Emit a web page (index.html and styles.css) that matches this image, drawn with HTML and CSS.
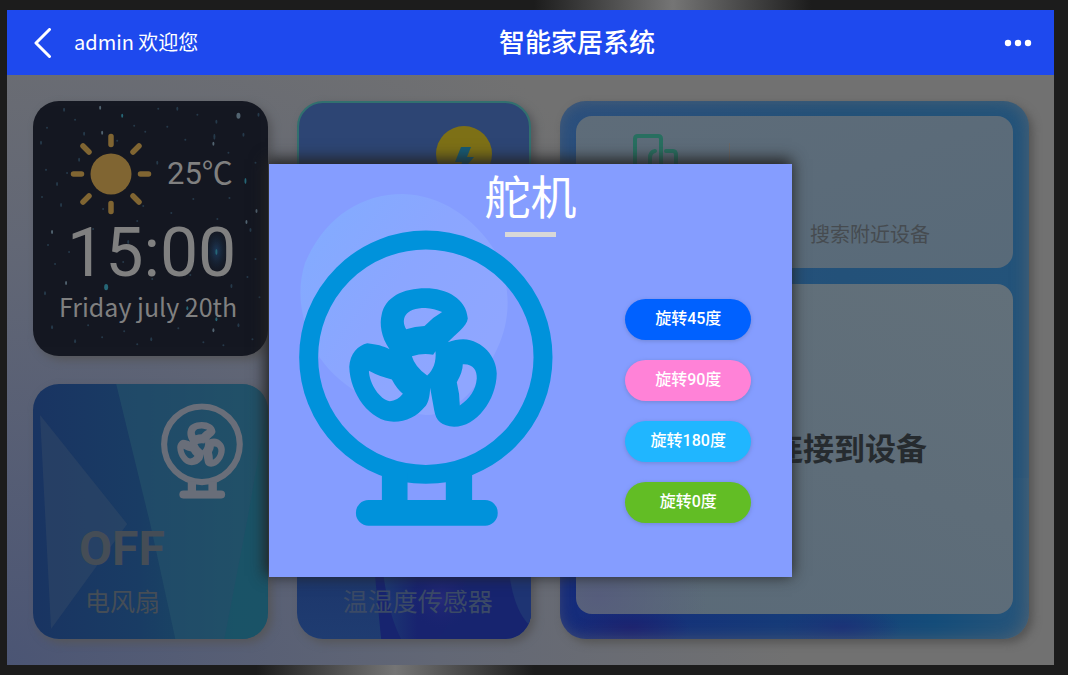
FILE: index.html
```html
<!DOCTYPE html>
<html lang="zh-CN">
<head>
<meta charset="utf-8">
<meta name="viewport" content="width=device-width, initial-scale=1">
<title>智能家居系统</title>
<link rel="stylesheet" href="styles.css">
</head>
<body>
<svg class="defs" aria-hidden="true">
  <symbol id="fan" viewBox="57 29 763 889">
    <circle cx="438" cy="411" r="352" fill="none" stroke="currentColor" stroke-width="57"/>
    <path fill="currentColor" d="M306 760H383V845H306ZM498 760H577V845H498Z"/>
    <rect x="228" y="840" width="426" height="77" rx="38" fill="currentColor"/>
    <path fill="currentColor" fill-rule="evenodd" d="M329 387C303 350 299 310 305 285C315 230 370 204 437 204C500 204 560 235 564 295C562 318 525 345 504 366C520 360 535 357 550 357C610 360 650 410 651 460C650 540 590 620 523 620C486 618 468 603 463 570L451 503C450 530 446 545 438 557C410 590 380 605 342 605C270 605 210 520 208 440C210 400 235 375 262 369C290 372 310 377 329 387ZM379 327C362 295 375 263 437 263C455 264 470 268 487 275L460 293L434 317Q405 318 379 327ZM396 408Q430 398 460 404L467 393C470 425 460 450 442 466Q405 440 396 408ZM267 452Q300 470 336 478Q350 505 369 521Q352 543 330 543C300 540 268 490 267 452ZM549 432C580 430 592 450 591 475C588 510 570 535 540 556Q540 520 531 486Q549 455 549 432Z"/>
  </symbol>
</svg>
<div class="app">
  <header class="topbar">
    <div class="user">
      <button class="icon-btn" type="button" aria-label="返回">
        <svg width="18" height="30" viewBox="0 0 18 30"><path d="M15.500 1.500 2 15 15.500 28.500" fill="none" stroke="#fff" stroke-width="3" stroke-linecap="round" stroke-linejoin="round"/></svg>
      </button>
      <span class="welcome">admin 欢迎您</span>
    </div>
    <h1 class="title">智能家居系统</h1>
    <button class="icon-btn" type="button" aria-label="更多">
      <svg width="28" height="8" viewBox="0 0 28 8" fill="#fff"><circle cx="4" cy="4" r="3.200"/><circle cx="14" cy="4" r="3.200"/><circle cx="24" cy="4" r="3.200"/></svg>
    </button>
  </header>

  <main class="board">
    <section class="card weather">
      <svg class="stars" viewBox="0 0 234 255" preserveAspectRatio="xMidYMid slice" aria-hidden="true">
        <defs>
          <radialGradient id="nebula"><stop offset="0" stop-color="#1d3b5c"/><stop offset="1" stop-color="#151822" stop-opacity="0"/></radialGradient>
        </defs>
        <ellipse cx="183" cy="150" rx="14" ry="26" fill="url(#nebula)"/>
        <g fill="#2a4355" opacity=".8">
          <ellipse cx="31" cy="9" rx="1" ry="2"/><ellipse cx="14" cy="27" rx="1" ry="1"/><ellipse cx="51" cy="33" rx="1" ry="2"/><ellipse cx="8" cy="42" rx="1" ry="2"/><ellipse cx="101" cy="25" rx="1" ry="1"/><ellipse cx="125" cy="8" rx="1" ry="1"/><ellipse cx="144" cy="8" rx="1" ry="2"/><ellipse cx="183" cy="21" rx="1" ry="2"/><ellipse cx="181" cy="36" rx="1" ry="3"/><ellipse cx="210" cy="34" rx="1" ry="2"/><ellipse cx="225" cy="14" rx="1" ry="2"/><ellipse cx="46" cy="59" rx="1" ry="2"/><ellipse cx="24" cy="83" rx="1" ry="2"/><ellipse cx="13" cy="69" rx="1" ry="1"/><ellipse cx="124" cy="62" rx="1" ry="2"/><ellipse cx="196" cy="97" rx="1" ry="1"/><ellipse cx="28" cy="104" rx="1" ry="2"/><ellipse cx="15" cy="144" rx="1" ry="1"/><ellipse cx="60" cy="128" rx="1" ry="1"/><ellipse cx="95" cy="141" rx="1" ry="2"/><ellipse cx="22" cy="163" rx="1" ry="1"/><ellipse cx="217" cy="129" rx="1" ry="2"/><ellipse cx="222" cy="158" rx="1" ry="1"/><ellipse cx="55" cy="171" rx="1" ry="2"/><ellipse cx="12" cy="192" rx="1" ry="2"/><ellipse cx="157" cy="174" rx="1" ry="1"/><ellipse cx="198" cy="185" rx="1" ry="2"/><ellipse cx="19" cy="226" rx="1" ry="2"/><ellipse cx="69" cy="236" rx="1" ry="1"/><ellipse cx="42" cy="240" rx="1" ry="2"/><ellipse cx="91" cy="230" rx="1" ry="1"/><ellipse cx="118" cy="238" rx="1" ry="2"/><ellipse cx="145" cy="227" rx="1" ry="1"/><ellipse cx="170" cy="241" rx="1" ry="1"/><ellipse cx="205" cy="224" rx="1" ry="2"/>
          <circle cx="42" cy="19" r="1"/><circle cx="84" cy="40" r="1"/><circle cx="112" cy="31" r="1"/><circle cx="134" cy="26" r="1"/><circle cx="152" cy="39" r="1"/><circle cx="164" cy="14" r="1"/><circle cx="195" cy="52" r="1"/><circle cx="222" cy="62" r="1"/><circle cx="34" cy="72" r="1"/><circle cx="9" cy="96" r="1"/><circle cx="70" cy="108" r="1"/><circle cx="110" cy="105" r="1"/><circle cx="138" cy="112" r="1"/><circle cx="160" cy="98" r="1"/><circle cx="184" cy="118" r="1"/><circle cx="36" cy="151" r="1"/><circle cx="104" cy="120" r="1"/><circle cx="90" cy="161" r="1"/><circle cx="119" cy="178" r="1"/><circle cx="214" cy="176" r="1"/><circle cx="226" cy="196" r="1"/><circle cx="30" cy="211" r="1"/><circle cx="55" cy="224" r="1"/><circle cx="104" cy="243" r="1"/><circle cx="190" cy="244" r="1"/><circle cx="219" cy="238" r="1"/>
        </g>
        <g fill="#526471">
          <ellipse cx="67" cy="7" rx="1" ry="2"/><ellipse cx="205" cy="15" rx="2" ry="3"/><ellipse cx="180" cy="43" rx="1" ry="2"/><ellipse cx="69" cy="32" rx="1" ry="2"/><ellipse cx="19" cy="131" rx="1" ry="2"/><ellipse cx="33" cy="182" rx="1" ry="2"/><ellipse cx="213" cy="121" rx="1" ry="2"/><ellipse cx="223" cy="110" rx="1" ry="2"/><ellipse cx="180" cy="229" rx="1" ry="2"/>
        </g>
        <g fill="#266676">
          <ellipse cx="89" cy="15" rx="1" ry="2"/><ellipse cx="73" cy="186" rx="2" ry="3"/><ellipse cx="212" cy="80" rx="1" ry="3"/><ellipse cx="183" cy="151" rx="1" ry="3"/><ellipse cx="154" cy="207" rx="1" ry="2"/><ellipse cx="183" cy="218" rx="1" ry="2"/>
        </g>
      </svg>
      <div class="weather-row">
        <svg width="82" height="82" viewBox="0 0 82 82" aria-hidden="true">
          <circle cx="41" cy="41" r="20.500" fill="#806532"/>
          <g stroke="#806532" stroke-width="5.500" stroke-linecap="round"><path d="M41 3.500V11.500M41 70.500V78.500M3.500 41H11.500M70.500 41H78.500M13 13 19 19M63 63 69 69M69 13 63 19M19 63 13 69"/></g>
        </svg>
        <span class="temp">25℃</span>
      </div>
      <div class="time">15:00</div>
      <div class="date">Friday july 20th</div>
    </section>

    <section class="card light">
      <svg width="56" height="56" viewBox="0 0 56 56" aria-hidden="true"><circle cx="28" cy="28" r="28" fill="#7d7016"/><path d="M25 21H35L31 31H38L23 49 26 36H19Z" fill="#165b75"/></svg>
    </section>

    <section class="card connect">
      <div class="panel search">
        <svg class="device-icon" width="48" height="48" viewBox="0 0 48 48" fill="none" stroke="#286f60" stroke-width="4" stroke-linecap="round" aria-hidden="true"><path d="M12 38H5Q2 38 2 34V5Q2 2 5 2H25Q28 2 28 5V34"/><path d="M17 34V24Q17 18 22 17M33 17H40Q43 17 43 21V42H20"/></svg>
        <span class="divider"></span>
        <span class="search-text">搜索附近设备</span>
      </div>
      <div class="panel status"><span>连接到设备</span></div>
    </section>

    <section class="card fan-card">
      <svg class="facets" viewBox="0 0 234 255" preserveAspectRatio="none" aria-hidden="true">
        <path d="M83 0H234V255H142L117 140Z" fill="#25516a" opacity=".65"/>
        <path d="M7 31 94 140 18 245Z" fill="#46566a" opacity=".3"/>
        <path d="M234 20V255H191L215 130Z" fill="#155567" opacity=".6"/>
      </svg>
      <svg class="fan-small" viewBox="57 29 763 889" aria-hidden="true"><use href="#fan" x="57" y="29" width="763" height="889"/></svg>
      <div class="fan-state">OFF</div>
      <div class="fan-name">电风扇</div>
    </section>

    <section class="card sensor">
      <svg class="facets" viewBox="0 0 234 255" preserveAspectRatio="none" aria-hidden="true">
        <defs>
          <linearGradient id="wave" x1="0" x2="1"><stop offset="0" stop-color="#1d3a73"/><stop offset=".4" stop-color="#18236f"/></linearGradient>
          <radialGradient id="glow"><stop offset="0" stop-color="#262a78"/><stop offset="1" stop-color="#18236f" stop-opacity="0"/></radialGradient>
        </defs>
        <path d="M76 170C80 215 82 235 84 255H234V170Z" fill="#17246f"/>
        <path d="M84 170C88 215 96 240 104 255H140C155 240 165 210 175 170Z" fill="url(#wave)"/>
        <circle cx="144" cy="215" r="32" fill="url(#glow)"/>
        <path d="M210 170C212 205 219 230 234 243V170Z" fill="#1e3473"/>
      </svg>
      <div class="sensor-name">温湿度传感器</div>
    </section>

    <div class="overlay">
      <section class="modal" role="dialog" aria-labelledby="dialog-title">
        <svg class="blob" viewBox="0 0 208 222" aria-hidden="true">
          <defs><linearGradient id="blob-fill" x1="0" y1=".2" x2=".8" y2=".8"><stop offset="0" stop-color="#83abff"/><stop offset=".5" stop-color="#8ba6ff"/><stop offset="1" stop-color="#8fa6ff"/></linearGradient></defs>
          <path d="M103 0C140 1 174 23 195 57C212 91 211 126 197 155C181 190 157 221 126 221C84 217 42 196 20 164C2 132-5 101 5 69C24 25 59 0 103 0Z" fill="url(#blob-fill)"/>
        </svg>
        <h2 class="modal-title" id="dialog-title">舵机</h2>
        <div class="modal-body">
          <svg class="fan-large" viewBox="57 29 763 889" aria-hidden="true"><use href="#fan" x="57" y="29" width="763" height="889"/></svg>
          <div class="actions">
            <button class="pill blue" type="button">旋转45度</button>
            <button class="pill pink" type="button">旋转90度</button>
            <button class="pill sky" type="button">旋转180度</button>
            <button class="pill green" type="button">旋转0度</button>
          </div>
        </div>
      </section>
    </div>
  </main>
</div>
</body>
</html>
```

FILE: styles.css
```css
* {
  box-sizing: border-box;
}

body {
  margin: 0;
  min-height: 100vh;
  padding: 10px 14px 10px 7px;
  display: flex;
  flex-direction: column;
  font-family: Roboto, "Noto Sans CJK SC", sans-serif;
  background:
    linear-gradient(90deg, #1c1c1c 50%, #757575 63%, #1c1c1c 76%) top / 100% 10px no-repeat,
    linear-gradient(90deg, #1c1c1c 24%, #757575 37%, #1c1c1c 50%) bottom / 100% 10px no-repeat,
    #1c1c1c;
}

h1,
h2 {
  margin: 0;
}

button {
  font: inherit;
  border: 0;
}

.defs {
  position: absolute;
  width: 0;
  height: 0;
}

.app {
  flex: 1;
  display: flex;
  flex-direction: column;
}

.topbar {
  height: 65px;
  display: grid;
  grid-template-columns: 48% 1fr auto;
  align-items: center;
  padding-right: 22px;
  background: #1e49ee;
  color: #fff;
}

.user {
  display: flex;
  align-items: center;
  gap: 22px;
  padding-left: 27px;
}

.icon-btn {
  display: flex;
  padding: 0;
  background: none;
}

.welcome {
  padding-bottom: 2px;
  font-family: "Noto Sans CJK SC", sans-serif;
  font-size: 20px;
  line-height: 30px;
}

.title {
  font-size: 26px;
  line-height: 36px;
  font-weight: 500;
}

.board {
  position: relative;
  flex: 1;
  display: grid;
  grid-template-columns: 1fr 1fr 2fr;
  grid-template-rows: 1fr 1fr;
  gap: 28px 29px;
  padding: 26px 25px 26px 26px;
  background: radial-gradient(ellipse 75% 130% at 0 100%, #4b5574, #626775 55%, #717171);
}

.card {
  position: relative;
  overflow: hidden;
  border-radius: 26px;
  box-shadow: 4px 4px 8px #55565a;
}

.weather {
  padding: 32px 26px 0 37px;
  background: #151822;
  color: #808080;
}

.stars,
.facets {
  position: absolute;
  inset: 0;
  width: 100%;
  height: 100%;
}

.weather-row {
  position: relative;
  display: flex;
  align-items: center;
  gap: 15px;
}

.temp {
  font-size: 31px;
  line-height: 40px;
}

.time {
  position: relative;
  margin-left: -3px;
  font-size: 68px;
  line-height: 76px;
}

.date {
  position: relative;
  margin: 0 -24px 0 -11px;
  font-family: "Noto Sans CJK SC", sans-serif;
  font-size: 25px;
  line-height: 30px;
  white-space: nowrap;
}

.light {
  display: flex;
  justify-content: flex-end;
  align-items: flex-start;
  padding: 23px 37px 0 0;
  background: #2d4574;
  border: 2px solid #32706f;
}

.connect {
  grid-column: 3;
  grid-row: 1 / span 2;
  display: grid;
  grid-template-rows: 152fr 330fr;
  gap: 16px;
  padding: 15px 16px 25px;
  background:
    radial-gradient(ellipse 60px 24px at 15% 98%, #1c2270, rgba(28, 34, 112, 0)),
    radial-gradient(ellipse 60px 24px at 60% 98%, #1b3278, rgba(27, 50, 120, 0)),
    linear-gradient(90deg, #152b7b, #163c79 50%, #154d7a 80%, #28557a) bottom / 100% 30% no-repeat,
    linear-gradient(90deg, #2b4f7d, #235179 60%, #23537a);
  box-shadow: 4px 4px 8px #555, inset -2px 0 16px rgba(112, 112, 112, 0.5);
}

.panel {
  border-radius: 16px;
  background: linear-gradient(160deg, #5e6c79, #586a79);
}

.search {
  display: flex;
  align-items: flex-start;
  padding: 18px 0 0 57px;
}

.divider {
  width: 1px;
  height: 60px;
  margin: 9px 0 0 48px;
  background: #6b6867;
}

.search-text {
  margin: 86px 0 0 80px;
  font-size: 20px;
  line-height: 30px;
  color: #464b50;
}

.status {
  display: flex;
  justify-content: center;
  align-items: center;
  padding: 2px 0 0 110px;
  font-size: 31px;
  line-height: 40px;
  font-weight: 700;
  color: #262b2f;
  background: radial-gradient(ellipse 25% 25% at 5% 95%, #565d7c, rgba(86, 93, 124, 0)), linear-gradient(200deg, #62707a, #5a6a78);
}

.fan-card {
  display: flex;
  flex-direction: column;
  align-items: flex-start;
  padding: 19px 25px 0 46px;
  background: linear-gradient(90deg, #193462, #193c64 45%, #1a5365);
  color: #454d56;
}

.fan-small {
  position: relative;
  align-self: flex-end;
  width: 82px;
  height: 96px;
  color: #696e79;
}

.fan-state {
  position: relative;
  margin-top: 20px;
  font-size: 48px;
  line-height: 60px;
  font-weight: 700;
}

.fan-name {
  position: relative;
  margin: 6px 0 0 6px;
  font-size: 25px;
  line-height: 36px;
}

.sensor {
  display: flex;
  flex-direction: column;
  justify-content: flex-end;
  align-items: center;
  padding: 0 0 18px 8px;
  background: linear-gradient(180deg, #1b3368 60%, #1f3c71);
}

.sensor-name {
  position: relative;
  font-size: 25px;
  line-height: 36px;
  color: #3b4a66;
}

.overlay {
  position: absolute;
  inset: 0;
  display: flex;
  justify-content: center;
  align-items: center;
}

.modal {
  position: relative;
  width: 50%;
  height: 70%;
  min-height: 380px;
  padding: 0 41px 0 30px;
  display: flex;
  flex-direction: column;
  background: #859dff;
  box-shadow: -2px -3px 14px 2px #222;
}

.blob {
  position: absolute;
  left: 31px;
  top: 30px;
  width: 208px;
  height: 222px;
}

.modal-title {
  position: relative;
  margin-left: 11px;
  display: flex;
  flex-direction: column;
  align-items: center;
  font-size: 46px;
  line-height: 68px;
  font-weight: 400;
  color: #fff;
}

.modal-title::after {
  content: "";
  width: 51px;
  height: 5px;
  background: #d8d8d8;
}

.modal-body {
  position: relative;
  margin-top: -7px;
  display: flex;
  justify-content: space-between;
  align-items: flex-end;
}

.fan-large {
  width: 254px;
  height: 296px;
  color: #0092db;
}

.actions {
  display: flex;
  flex-direction: column;
  gap: 20px;
  margin-bottom: 3px;
}

.pill {
  width: 126px;
  height: 41px;
  padding: 0;
  border-radius: 21px;
  font-size: 16px;
  line-height: 24px;
  font-weight: 500;
  color: #fff;
  box-shadow: 0 1px 4px #7186d4;
}

.blue {
  background: #0061ff;
}

.pink {
  background: #ff82d7;
}

.sky {
  background: #20b6ff;
}

.green {
  background: #62bd25;
}
```
